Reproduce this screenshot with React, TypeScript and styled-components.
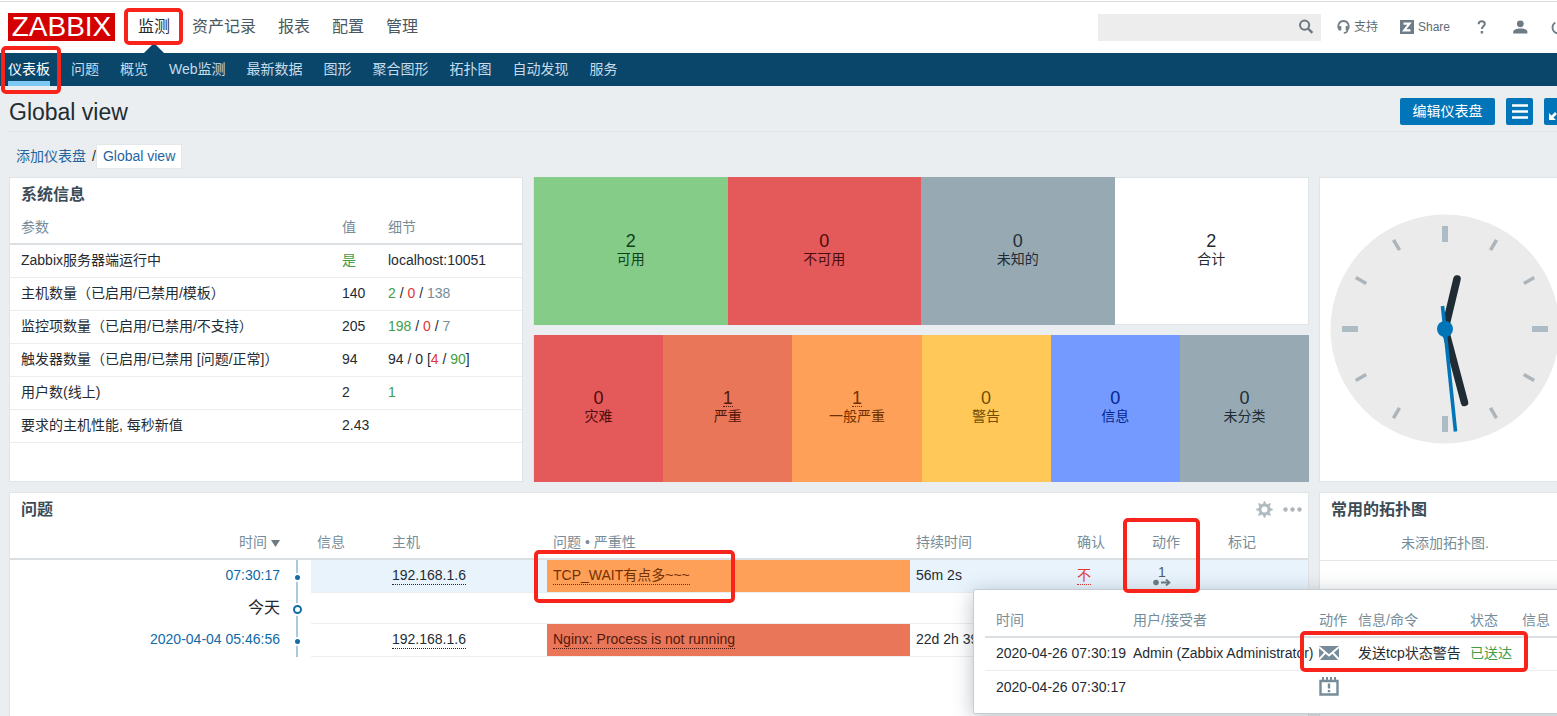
import React from 'react';
import styled, { createGlobalStyle, css } from 'styled-components';

const GlobalStyle = createGlobalStyle`
  *, *::before, *::after { box-sizing: border-box; }
  html, body { margin: 0; height: 100%; overflow: hidden; }
  body {
    background: #ebeef0;
    color: #1f2c33;
    font: 14px/18px "Liberation Sans", Arial, "Noto Sans CJK SC", sans-serif;
  }
  #root { height: 100%; }
  a { color: inherit; text-decoration: none; }
  ul { list-style: none; margin: 0; padding: 0; }
  button { font: inherit; border: 0; padding: 0; cursor: pointer; }
`;

/* The dashboard is slightly wider than the window, its right edge is scrolled out of view. */
const Page = styled.div`
  width: calc(100% + 24px);
  min-height: 100vh;
  display: flex;
  flex-direction: column;
`;

const Mark = styled.span<{ $inset: string }>`
  position: absolute;
  inset: ${(p) => p.$inset};
  border: 4px solid #f8231b;
  border-radius: 5px;
  z-index: 30;
  pointer-events: none;
`;

/* ---------- header ---------- */

const Header = styled.header`
  display: flex;
  align-items: center;
  height: 53px;
  padding: 0 15px 0 8px;
  background: #fff;
  border-top: 1px solid #fff;
  box-shadow: inset 0 1px 0 #d8dcde;
`;

const Logo = styled.a`
  width: 107px;
  height: 28px;
  margin-right: 23px;
  background: #d40000;
  color: #fff;
  font-size: 28px;
  line-height: 28px;
  text-align: center;
`;

const MainMenu = styled.ul`
  display: flex;
  align-self: stretch;
  gap: 22px;
  flex: 1;
`;

const MainItem = styled.li<{ $active?: boolean }>`
  position: relative;
  display: flex;
  align-items: center;
  font-size: 16px;
  color: ${(p) => (p.$active ? '#1f2c33' : '#4a5862')};
  ${(p) =>
    p.$active &&
    css`
      &::after {
        content: '';
        position: absolute;
        bottom: 0;
        left: 50%;
        margin-left: -10px;
        border: 10px solid transparent;
        border-top: 0;
        border-bottom-color: #0a466a;
      }
    `}
`;

const Search = styled.form`
  display: flex;
  align-items: center;
  width: 223px;
  height: 27px;
  margin-right: 16px;
  padding-right: 7px;
  background: #ededed;

  input {
    flex: 1;
    min-width: 0;
    height: 100%;
    padding: 0 6px;
    border: 0;
    background: transparent;
    font: inherit;
  }
  button {
    display: flex;
    background: none;
  }
`;

const Links = styled.div`
  display: flex;
  gap: 22px;
  margin-right: 25px;
  font-size: 12px;
  color: #5d6b73;

  a {
    display: flex;
    align-items: center;
    gap: 4px;
  }
`;

const Icons = styled.div`
  display: flex;
  gap: 23px;

  a { display: flex; }
`;

/* ---------- sub menu ---------- */

const SubMenu = styled.ul`
  display: flex;
  gap: 21px;
  height: 33px;
  padding: 0 8px;
  background: #0a466a;
`;

const SubItem = styled.li<{ $active?: boolean }>`
  position: relative;
  display: flex;
  align-items: center;
  border-top: 3px solid transparent;
  border-bottom: 5px solid ${(p) => (p.$active ? '#7dc8f5' : 'transparent')};
  color: ${(p) => (p.$active ? '#fff' : '#c6dcea')};
`;

/* ---------- title ---------- */

const TitleBar = styled.div`
  display: flex;
  align-items: center;
  gap: 11px;
  height: 46px;
  margin-left: 8px;
  padding: 5px 10px 0 1px;
  border-bottom: 1px solid #dfe4e7;

  h1 {
    flex: 1;
    margin: 0;
    padding-top: 2px;
    font-size: 23px;
    line-height: 28px;
    font-weight: 400;
  }
`;

const Button = styled.button<{ $square?: boolean }>`
  display: flex;
  align-items: center;
  justify-content: center;
  width: ${(p) => (p.$square ? '27px' : '95px')};
  height: 27px;
  border-radius: 2px;
  background: #0275b8;
  color: #fff;
`;

const Crumbs = styled.nav`
  display: flex;
  align-items: center;
  height: 45px;
  padding: 3px 0 0 16px;
  color: #1f65a0;

  i {
    margin-left: 6px;
    font-style: normal;
    color: #1f2c33;
  }
`;

const CrumbTab = styled.a`
  padding: 2px 6px 3px;
  background: #fff;
  border: 1px solid #e3e8eb;
`;

/* ---------- dashboard grid ---------- */

const Grid = styled.main`
  display: grid;
  grid-template-columns: 2fr 3fr 1fr;
  grid-template-rows: auto 1fr;
  flex: 1;
  margin-left: 9px;
`;

const Cell = styled.div<{ $span?: number; $last?: boolean }>`
  grid-column: span ${(p) => p.$span ?? 1};
  min-width: 0;
  padding: ${(p) => (p.$last ? '0 10px 0 0' : '0 10px 10px 0')};
  display: flex;
  flex-direction: column;
  gap: 10px;
`;

const Panel = styled.section<{ $open?: boolean }>`
  flex: 1;
  background: #fff;
  border: 1px solid #dfe4e7;
  border-bottom-width: ${(p) => (p.$open ? '0' : '1px')};
`;

const InfoPanel = styled(Panel)`
  padding-bottom: 38px;
`;

const PanelHead = styled.div`
  display: flex;
  align-items: center;
  gap: 10px;
  height: 33px;
  padding: 0 6px 0 11px;

  h4 {
    flex: 1;
    margin: 0;
    font-size: 16px;
    font-weight: 700;
    color: #3c4c56;
  }
  button {
    display: flex;
    background: none;
  }
`;

const Table = styled.table`
  width: 100%;
  table-layout: fixed;
  border-collapse: separate;
  border-spacing: 0;

  th, td {
    height: 33px;
    padding: 0 6px 2px;
    text-align: left;
    font-weight: 400;
    white-space: nowrap;
    border-bottom: 1px solid #ebeef0;
  }
  th {
    height: 34px;
    padding-bottom: 0;
    color: #768d99;
    border-bottom: 2px solid #dcdfe2;
  }
  th:first-child, td:first-child { padding-left: 11px; }
`;

const Col = styled.col<{ $w?: number }>`
  width: ${(p) => (p.$w ? `${p.$w}px` : 'auto')};
`;

const Tone = styled.span<{ $c: 'green' | 'red' | 'grey' }>`
  color: ${(p) => ({ green: '#429e47', red: '#e33734', grey: '#768d99' })[p.$c]};
`;

/* ---------- tiles ---------- */

const Tiles = styled.div`
  flex: 1;
  display: flex;
  background: #fff;
  border: 1px solid #dfe4e7;
`;

const Tile = styled.div<{ $bg: string; $fg: string }>`
  flex: 1;
  display: flex;
  flex-direction: column;
  align-items: center;
  justify-content: center;
  margin: -1px 0;
  padding-bottom: 2px;
  background: ${(p) => p.$bg};
  color: ${(p) => p.$fg};

  &:last-child { margin-right: ${(p) => (p.$bg === 'transparent' ? '0' : '-1px')}; }
`;

const Count = styled.span<{ $linked?: boolean }>`
  height: 18px;
  font-size: 18px;
  line-height: 18px;
  border-bottom: 1px ${(p) => (p.$linked ? 'dotted' : 'none')};
`;

/* ---------- clock ---------- */

const ClockPanel = styled(Panel)`
  display: flex;
  align-items: center;
  justify-content: center;
  padding-bottom: 2px;
`;

/* ---------- problems ---------- */

const ProblemTable = styled(Table)`
  & > tbody > tr > :first-child,
  & > thead > tr > :first-child { text-align: right; }
  & > tbody > tr > td:nth-child(-n + 2) { border-bottom-color: transparent; }
`;

const Row = styled.tr<{ $hot?: boolean; $short?: boolean }>`
  & > td:nth-child(n + 3) { background-color: ${(p) => (p.$hot ? '#e8f3fc' : 'transparent')}; }
  & > td { height: ${(p) => (p.$short ? '31px' : '33px')}; }
`;

const Line = styled.td`
  && { padding: 2px 0 0; }
  background: linear-gradient(#a8cade, #a8cade) 10px 0 / 2px 100% repeat-y;
`;

const Dot = styled.span<{ $ring?: boolean }>`
  display: block;
  width: ${(p) => (p.$ring ? '9px' : '5px')};
  height: ${(p) => (p.$ring ? '9px' : '5px')};
  margin-left: ${(p) => (p.$ring ? '7px' : '9px')};
  border-radius: 50%;
  border: ${(p) => (p.$ring ? '2px solid #0f6ea5' : '0')};
  background: ${(p) => (p.$ring ? '#fff' : '#0f6ea5')};
  box-shadow: 0 0 0 2px #fff;
`;

const Time = styled.a`
  color: #0f6aa8;
`;

const TodayCell = styled.td`
  && { padding-bottom: 0; }
  font-size: 16px;
`;

const Dotted = styled.a`
  padding-bottom: 1px;
  border-bottom: 1px dotted currentColor;
`;

const Problem = styled.td<{ $bg: string; $fg: string }>`
  position: relative;
  &&&& {
    background-color: ${(p) => p.$bg};
    background-clip: padding-box;
    color: ${(p) => p.$fg};
  }
`;

const ActionCell = styled.td`
  position: relative;
`;

const ActionBadge = styled.button`
  display: flex;
  flex-direction: column;
  align-items: center;
  width: 20px;
  background: none;
  color: #4f5d66;
  line-height: 14px;
`;

const Popup = styled.div`
  position: absolute;
  z-index: 20;
  top: 29px;
  left: -173px;
  width: 640px;
  padding: 14px 11px 9px;
  background: #fff;
  border: 1px solid #c3cdd3;
  border-radius: 2px;
  box-shadow: 0 4px 20px 0 rgba(58, 74, 83, 0.35);
  color: #1f2c33;
`;

const PopupTable = styled(Table)`
  & > * > tr > :not(:first-child) {
    padding-left: 0;
    padding-right: 0;
  }
  tbody tr:last-child td { border-bottom: 0; }
  svg { display: block; }
`;

const Empty = styled.p`
  margin: 0;
  padding: 8px 0;
  line-height: 18px;
  text-align: center;
  color: #768d99;
  border-bottom: 1px solid #e3e7ea;
`;

/* ---------- drawings ---------- */

const SearchIcon = () => (
  <svg width="16" height="16" viewBox="0 0 16 16" fill="none" stroke="#6b7780">
    <circle cx="6.6" cy="6.1" r="4.6" strokeWidth="2" />
    <path d="M10 9.5l4.4 4.4" strokeWidth="2.4" />
  </svg>
);

const SupportIcon = () => (
  <svg width="13" height="14" viewBox="0 0 13 14" fill="none" stroke="#768087">
    <path d="M2 9.4C.2 5.2 2.2 1 6.5 1s6.3 4.200 4.500 8.400" strokeWidth="1.900" />
    <path d="M3 6v4.400M10 6v4.400" strokeWidth="2.600" />
    <path d="M10.400 10c0 2-1 2.900-3.600 2.900" strokeWidth="1.600" />
  </svg>
);

const ShareIcon = () => (
  <svg width="14" height="14" viewBox="0 0 14 14">
    <rect width="14" height="14" fill="#6d7c86" />
    <path d="M3.500 3.600h6L4.200 10.400h6.300" fill="none" stroke="#fff" strokeWidth="2.200" />
  </svg>
);

const HelpIcon = () => (
  <svg width="15" height="15" viewBox="0 0 15 15">
    <path d="M3.600 4.200C3.700 2.200 4.900 1.300 6.700 1.300s3.100 1 3.100 2.600c0 2.300-2.900 2.600-2.900 5.200" fill="none" stroke="#6f7b83" strokeWidth="2" />
    <rect x="5.700" y="11" width="2.400" height="2.500" fill="#6f7b83" />
  </svg>
);

const UserIcon = () => (
  <svg width="15" height="15" viewBox="0 0 15 15" fill="#6f7b83">
    <circle cx="7.300" cy="3.800" r="3.400" />
    <path d="M.2 13.600v-1.800c0-2 3.200-3.400 7.100-3.400s7.100 1.400 7.100 3.400v1.800z" />
  </svg>
);

const PowerIcon = () => (
  <svg width="15" height="15" viewBox="0 0 15 15" fill="none" stroke="#6f7b83" strokeWidth="1.8">
    <path d="M4.3 2.4a6 6 0 1 0 6.400 0M7.500 0v7" />
  </svg>
);

const MenuIcon = () => (
  <svg width="16" height="15" viewBox="0 0 16 15" stroke="#fff" strokeWidth="2.6">
    <path d="M0 1.5h16M0 7.5h16M0 13.5h16" />
  </svg>
);

const FullscreenIcon = () => (
  <svg width="17" height="17" viewBox="0 0 17 17" stroke="#fff" fill="#fff">
    <path d="M2 15l5-5M15 2l-5 5" strokeWidth="2.8" />
    <path d="M0 10v7h7zM17 7v-7h-7z" strokeWidth="0" />
  </svg>
);

const GearIcon = () => (
  <svg width="17" height="17" viewBox="-8.5 -8.5 17 17" fill="none" stroke="#b0bbc0">
    <circle r="4.2" strokeWidth="2.400" />
    {[0, 45, 90, 135, 180, 225, 270, 315].map((a) => (
      <path key={a} d="M-2-4.600L0-8.500L2-4.600z" fill="#b0bbc0" strokeWidth="0.600" transform={`rotate(${a})`} />
    ))}
  </svg>
);

const DotsIcon = () => (
  <svg width="19" height="5" viewBox="0 0 19 5" fill="#b0b6ba">
    <circle cx="2.5" cy="2.5" r="2.2" />
    <circle cx="9.5" cy="2.5" r="2.2" />
    <circle cx="16.5" cy="2.5" r="2.2" />
  </svg>
);

const SortIcon = () => (
  <svg width="9" height="7" viewBox="0 0 9 7" fill="#6b7a83">
    <path d="M0 0h9L4.500 7z" />
  </svg>
);

const ArrowIcon = () => (
  <svg width="18" height="7" viewBox="0 0 18 7" fill="none" stroke="#6b7a83">
    <circle cx="3" cy="3.5" r="2.8" fill="#6b7a83" stroke="none" />
    <path d="M8 3.5h8" strokeWidth="2" />
    <path d="M13 .5l3.400 3L13 6.500" strokeWidth="1.900" />
  </svg>
);

const MailIcon = () => (
  <svg width="20" height="14" viewBox="0 0 20 14">
    <rect width="20" height="14" fill="#768d99" />
    <path d="M0 1l10 8.500L20 1M0 13.500l6.500-7M20 13.500l-6.500-7" fill="none" stroke="#fff" strokeWidth="2" />
  </svg>
);

const EventIcon = () => (
  <svg width="20" height="19" viewBox="0 0 20 19" fill="none" stroke="#768d99">
    <path d="M1.500 4h17v13.500h-17z" strokeWidth="2.400" />
    <path d="M4 0v4M8 0v4M12 0v4M16 0v4" strokeWidth="2" />
    <path d="M10 6.500v5M10 13v2.200" strokeWidth="2.400" />
  </svg>
);

const Clock = () => (
  <svg width="230" height="230" viewBox="-115 -115 230 230" role="img" aria-label="12:27:29">
    <circle r="114.5" fill="#ebebeb" />
    {Array.from({ length: 12 }, (_, i) =>
      i % 3 === 0 ? (
        <rect key={i} x="-3" y="-103" width="6" height="16" fill="#acbbc4" transform={`rotate(${i * 30})`} />
      ) : (
        <rect key={i} x="-1.7" y="-103" width="3.5" height="12" fill="#adb5ba" transform={`rotate(${i * 30})`} />
      ),
    )}
    <g strokeLinecap="round" stroke="#1f2c33" strokeWidth="7.5">
      <path d="M0 0L12-50" />
      <path d="M0 0L19.5 73.5" />
    </g>
    <path d="M-2.5-23L10.5 102.5" stroke="#0275b8" strokeWidth="3.6" />
    <circle r="8" fill="#0275b8" />
  </svg>
);

/* ---------- data ---------- */

const mainMenu = ['监测', '资产记录', '报表', '配置', '管理'];
const subMenu = ['仪表板', '问题', '概览', 'Web监测', '最新数据', '图形', '聚合图形', '拓扑图', '自动发现', '服务'];

const systemInfo: [string, React.ReactNode, React.ReactNode][] = [
  ['Zabbix服务器端运行中', <Tone $c="green">是</Tone>, 'localhost:10051'],
  ['主机数量（已启用/已禁用/模板）', '140', <><Tone $c="green">2</Tone> / <Tone $c="red">0</Tone> / <Tone $c="grey">138</Tone></>],
  ['监控项数量（已启用/已禁用/不支持）', '205', <><Tone $c="green">198</Tone> / <Tone $c="red">0</Tone> / <Tone $c="grey">7</Tone></>],
  ['触发器数量（已启用/已禁用 [问题/正常]）', '94', <>94 / 0 [<Tone $c="red">4</Tone> / <Tone $c="green">90</Tone>]</>],
  ['用户数(线上)', '2', <Tone $c="green">1</Tone>],
  ['要求的主机性能, 每秒新值', '2.43', ''],
];

const hostTiles = [
  { n: 2, label: '可用', bg: '#86cc89', fg: '#10401a' },
  { n: 0, label: '不可用', bg: '#e45959', fg: '#4b0c0c' },
  { n: 0, label: '未知的', bg: '#97aab3', fg: '#1f2c33' },
  { n: 2, label: '合计', bg: 'transparent', fg: '#1f2c33' },
];

const severityTiles = [
  { n: 0, label: '灾难', bg: '#e45959', fg: '#4b0c0c' },
  { n: 1, label: '严重', bg: '#e97659', fg: '#52190b' },
  { n: 1, label: '一般严重', bg: '#ffa059', fg: '#733100' },
  { n: 0, label: '警告', bg: '#ffc859', fg: '#734d00' },
  { n: 0, label: '信息', bg: '#7499ff', fg: '#00268e' },
  { n: 0, label: '未分类', bg: '#97aab3', fg: '#1f2c33' },
];

const TileRow = ({ items, links }: { items: typeof hostTiles; links?: boolean }) => (
  <Tiles>
    {items.map((t) => (
      <Tile key={t.label} $bg={t.bg} $fg={t.fg}>
        <Count $linked={links && t.n > 0}>{t.n}</Count>
        <span>{t.label}</span>
      </Tile>
    ))}
  </Tiles>
);

const ActionPopup = () => (
  <Popup>
    <PopupTable>
      <colgroup>
        <Col $w={148} />
        <Col $w={186} />
        <Col $w={39} />
        <Col $w={112} />
        <Col $w={52} />
        <Col />
      </colgroup>
      <thead>
        <tr>
          <th>时间</th>
          <th>用户/接受者</th>
          <th>动作</th>
          <th>信息/命令</th>
          <th>状态</th>
          <th>信息</th>
        </tr>
      </thead>
      <tbody>
        <tr>
          <td>2020-04-26 07:30:19</td>
          <td>Admin (Zabbix Administrator)</td>
          <td><MailIcon /></td>
          <td>发送tcp状态警告</td>
          <td><Tone $c="green">已送达</Tone></td>
          <td />
        </tr>
        <tr>
          <td>2020-04-26 07:30:17</td>
          <td />
          <td><EventIcon /></td>
          <td />
          <td />
          <td />
        </tr>
      </tbody>
    </PopupTable>
    <Mark $inset="41px 84px 41px 326px" />
  </Popup>
);

export default function App() {
  return (
    <Page>
      <GlobalStyle />
      <Header>
        <Logo href="#">ZABBIX</Logo>
        <MainMenu>
          {mainMenu.map((m, i) => (
            <MainItem key={m} $active={i === 0}>
              <a href="#">{m}</a>
              {i === 0 && <Mark $inset="7px -13px 8px -14px" />}
            </MainItem>
          ))}
        </MainMenu>
        <Search>
          <input type="text" aria-label="搜索" />
          <button type="button" aria-label="搜索"><SearchIcon /></button>
        </Search>
        <Links>
          <a href="#"><SupportIcon />支持</a>
          <a href="#"><ShareIcon />Share</a>
        </Links>
        <Icons>
          <a href="#" aria-label="帮助"><HelpIcon /></a>
          <a href="#" aria-label="用户"><UserIcon /></a>
          <a href="#" aria-label="退出"><PowerIcon /></a>
        </Icons>
      </Header>

      <SubMenu>
        {subMenu.map((m, i) => (
          <SubItem key={m} $active={i === 0}>
            <a href="#">{m}</a>
            {i === 0 && <Mark $inset="-10px -11px -13px -7px" />}
          </SubItem>
        ))}
      </SubMenu>

      <TitleBar>
        <h1>Global view</h1>
        <Button type="button">编辑仪表盘</Button>
        <Button type="button" $square aria-label="菜单"><MenuIcon /></Button>
        <Button type="button" $square aria-label="全屏"><FullscreenIcon /></Button>
      </TitleBar>

      <Crumbs>
        <a href="#">添加仪表盘</a>
        <i>/</i>
        <CrumbTab href="#">Global view</CrumbTab>
      </Crumbs>

      <Grid>
        <Cell>
          <InfoPanel>
            <PanelHead><h4>系统信息</h4></PanelHead>
            <Table>
              <colgroup>
                <Col />
                <Col $w={46} />
                <Col $w={140} />
              </colgroup>
              <thead>
                <tr><th>参数</th><th>值</th><th>细节</th></tr>
              </thead>
              <tbody>
                {systemInfo.map(([name, value, detail]) => (
                  <tr key={name}><td>{name}</td><td>{value}</td><td>{detail}</td></tr>
                ))}
              </tbody>
            </Table>
          </InfoPanel>
        </Cell>

        <Cell>
          <TileRow items={hostTiles} />
          <TileRow items={severityTiles} links />
        </Cell>

        <Cell>
          <ClockPanel><Clock /></ClockPanel>
        </Cell>

        <Cell $span={2} $last>
          <Panel $open>
            <PanelHead>
              <h4>问题</h4>
              <button type="button" aria-label="设置"><GearIcon /></button>
              <button type="button" aria-label="更多"><DotsIcon /></button>
            </PanelHead>
            <ProblemTable>
              <colgroup>
                <Col $w={276} />
                <Col $w={25} />
                <Col $w={75} />
                <Col $w={161} />
                <Col />
                <Col $w={161} />
                <Col $w={75} />
                <Col $w={76} />
                <Col $w={86} />
              </colgroup>
              <thead>
                <tr>
                  <th>时间 <SortIcon /></th>
                  <th />
                  <th>信息</th>
                  <th>主机</th>
                  <th>问题 • 严重性</th>
                  <th>持续时间</th>
                  <th>确认</th>
                  <th>动作</th>
                  <th>标记</th>
                </tr>
              </thead>
              <tbody>
                <Row $hot>
                  <td><Time href="#">07:30:17</Time></td>
                  <Line><Dot /></Line>
                  <td />
                  <td><Dotted href="#">192.168.1.6</Dotted></td>
                  <Problem $bg="#ffa059" $fg="#733100">
                    <Dotted href="#">TCP_WAIT有点多~~~</Dotted>
                    <Mark $inset="-10px 175px -11px -13px" />
                  </Problem>
                  <td>56m 2s</td>
                  <td><Tone $c="red"><Dotted href="#">不</Dotted></Tone></td>
                  <ActionCell>
                    <ActionBadge type="button">1<ArrowIcon /></ActionBadge>
                    <Mark $inset="-42px 22px -1px -23px" />
                    <ActionPopup />
                  </ActionCell>
                  <td />
                </Row>
                <Row $short>
                  <TodayCell>今天</TodayCell>
                  <Line><Dot $ring /></Line>
                  <td colSpan={7} />
                </Row>
                <Row>
                  <td><Time href="#">2020-04-04 05:46:56</Time></td>
                  <Line><Dot /></Line>
                  <td />
                  <td><Dotted href="#">192.168.1.6</Dotted></td>
                  <Problem $bg="#e97659" $fg="#52190b">
                    <Dotted href="#">Nginx: Process is not running</Dotted>
                  </Problem>
                  <td>22d 2h 39m</td>
                  <td />
                  <td />
                  <td />
                </Row>
              </tbody>
            </ProblemTable>
          </Panel>
        </Cell>

        <Cell $last>
          <Panel $open>
            <PanelHead><h4>常用的拓扑图</h4></PanelHead>
            <Empty>未添加拓扑图.</Empty>
          </Panel>
        </Cell>
      </Grid>
    </Page>
  );
}
